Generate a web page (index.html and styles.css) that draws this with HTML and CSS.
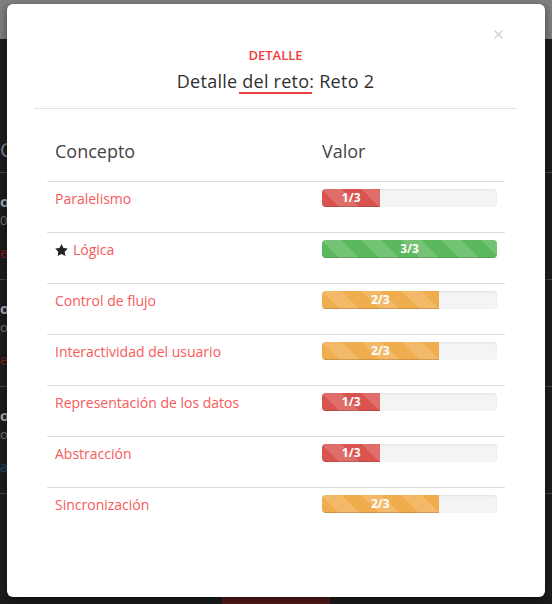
FILE: index.html
```html
<!DOCTYPE html>
<html lang="es">
<head>
<meta charset="utf-8">
<title>Detalle del reto</title>
<link rel="stylesheet" href="styles.css">
</head>
<body>
<div class="page">
  <div class="navbar"></div>
  <div class="content">
    <h2 class="page-title">Clase</h2>
    <div class="challenge">
      <div class="ch-title">o</div>
      <div class="ch-sub">0</div>
      <div class="ch-link red">el</div>
    </div>
    <div class="challenge">
      <div class="ch-title">o</div>
      <div class="ch-sub">or</div>
      <div class="ch-link red">el</div>
    </div>
    <div class="challenge">
      <div class="ch-title">o</div>
      <div class="ch-sub">or</div>
      <div class="ch-link blue">a</div>
    </div>
    <div class="pager">
      <span class="pager-btn"></span>
    </div>
  </div>
</div>

<div class="modal" role="dialog">
  <button class="close" aria-label="Cerrar">
    <svg width="9" height="9" viewBox="0 0 9 9"><path d="M0.5 0.5L8.5 8.5M8.5 0.5L0.5 8.5" stroke="#cfcfcf" stroke-width="1.3" fill="none"/></svg>
  </button>
  <div class="modal-header">
    <div class="eyebrow">DETALLE</div>
    <h3 class="modal-title">Detalle <span class="mark">del reto</span>: Reto 2</h3>
  </div>
  <div class="modal-body">
    <table class="detail-table">
      <thead>
        <tr><th class="col-concept">Concepto</th><th class="col-value">Valor</th></tr>
      </thead>
      <tbody>
        <tr>
          <td class="concept">Paralelismo</td>
          <td><div class="progress"><div class="bar bar-danger" style="width:33.33%">1/3</div></div></td>
        </tr>
        <tr>
          <td class="concept"><svg class="star" width="13" height="12" viewBox="2 2 20 19"><path d="M12 2l3.09 6.26L22 9.27l-5 4.87 1.18 6.88L12 17.77l-6.18 3.25L7 14.14 2 9.27l6.91-1.01L12 2z" fill="#222"/></svg>Lógica</td>
          <td><div class="progress"><div class="bar bar-success" style="width:100%">3/3</div></div></td>
        </tr>
        <tr>
          <td class="concept">Control de flujo</td>
          <td><div class="progress"><div class="bar bar-warning" style="width:66.67%">2/3</div></div></td>
        </tr>
        <tr>
          <td class="concept">Interactividad del usuario</td>
          <td><div class="progress"><div class="bar bar-warning" style="width:66.67%">2/3</div></div></td>
        </tr>
        <tr>
          <td class="concept">Representación de los datos</td>
          <td><div class="progress"><div class="bar bar-danger" style="width:33.33%">1/3</div></div></td>
        </tr>
        <tr>
          <td class="concept">Abstracción</td>
          <td><div class="progress"><div class="bar bar-danger" style="width:33.33%">1/3</div></div></td>
        </tr>
        <tr>
          <td class="concept">Sincronización</td>
          <td><div class="progress"><div class="bar bar-warning" style="width:66.67%">2/3</div></div></td>
        </tr>
      </tbody>
    </table>
  </div>
</div>
</body>
</html>
```
FILE: styles.css
```css
* { box-sizing: border-box; }
html, body { margin: 0; height: 100%; }
body {
  position: relative;
  overflow: hidden;
  background: #1c1c1c;
  font-family: "Open Sans", "Liberation Sans", sans-serif;
  color: #333;
}

/* dimmed page behind the dialog */
.navbar { height: 39px; background: #7f7f7f; }
.content { padding-top: 97px; }
.page-title {
  margin: 0;
  font-size: 20px;
  line-height: 28px;
  font-weight: 400;
  color: #7a8591;
  padding-bottom: 8px;
}
.challenge {
  height: 107px;
  border-top: 1px solid #444;
  padding-top: 18px;
}
.ch-title { font-size: 15px; line-height: 20px; font-weight: 700; color: #aaa; }
.ch-sub { font-size: 13px; line-height: 18px; color: #777; }
.ch-link { font-size: 14px; line-height: 20px; margin-top: 14px; }
.ch-link.red { color: #8a1e1e; }
.ch-link.blue { color: #1e4a70; }
.pager {
  border-top: 1px solid #444;
  padding-top: 103px;
  display: flex;
  justify-content: center;
}
.pager-btn { width: 108px; height: 34px; background: #551a1a; }

/* dialog */
.modal {
  position: absolute;
  left: 7px;
  top: 4px;
  width: 538px;
  height: 593px;
  background: #fff;
  border-radius: 6px;
  box-shadow: 0 3px 9px rgba(0, 0, 0, 0.5);
}
.close {
  position: absolute;
  top: 26px;
  right: 42px;
  width: 9px;
  height: 9px;
  padding: 0;
  border: 0;
  background: none;
  display: flex;
}
.modal-header {
  margin: 0 28px 0 27px;
  padding: 42px 0 14px;
  text-align: center;
  border-bottom: 1px solid #e3e3e3;
}
.eyebrow {
  font-size: 13px;
  line-height: 18px;
  font-weight: 600;
  color: #f23d3d;
}
.modal-title {
  margin: 4px 0 0;
  font-size: 18px;
  line-height: 26px;
  font-weight: 400;
  letter-spacing: 0.25px;
  color: #2f2f2f;
}
.mark {
  display: inline-block;
  line-height: 22px;
  padding: 0 3px;
  margin: 0 -3px;
  border-bottom: 2px solid #e8403d;
}

.modal-body { padding: 21px 40px 0; }
.detail-table {
  width: 100%;
  border-collapse: collapse;
}
.detail-table th {
  text-align: left;
  font-size: 18px;
  line-height: 26px;
  font-weight: 400;
  color: #444;
  padding: 8px 8px 17px;
  border-bottom: 1px solid #ddd;
}
.col-value { width: 191px; }
.detail-table td {
  padding: 7px 8px 9px;
  border-top: 1px solid #ddd;
  vertical-align: top;
}
.detail-table td.concept {
  padding-top: 8px;
  font-size: 14px;
  line-height: 18px;
  color: #f65a5a;
}
.star { margin-right: 5px; vertical-align: -1px; }

.progress {
  height: 18px;
  margin-bottom: 16px;
  background: #f4f4f4;
  border-radius: 4px;
  box-shadow: inset 0 1px 2px rgba(0, 0, 0, 0.08);
  overflow: hidden;
}
.bar {
  height: 100%;
  font-size: 12px;
  line-height: 18px;
  font-weight: 700;
  color: #fff;
  text-align: center;
  box-shadow: inset 0 -1px 0 rgba(0, 0, 0, 0.15);
  background-image: linear-gradient(45deg,
    rgba(255, 255, 255, 0.15) 25%, transparent 25%, transparent 50%,
    rgba(255, 255, 255, 0.15) 50%, rgba(255, 255, 255, 0.15) 75%,
    transparent 75%, transparent);
  background-size: 40px 40px;
}
.bar-danger { background-color: #d9534f; }
.bar-success { background-color: #5cb85c; }
.bar-warning { background-color: #f0ad4e; }
```
